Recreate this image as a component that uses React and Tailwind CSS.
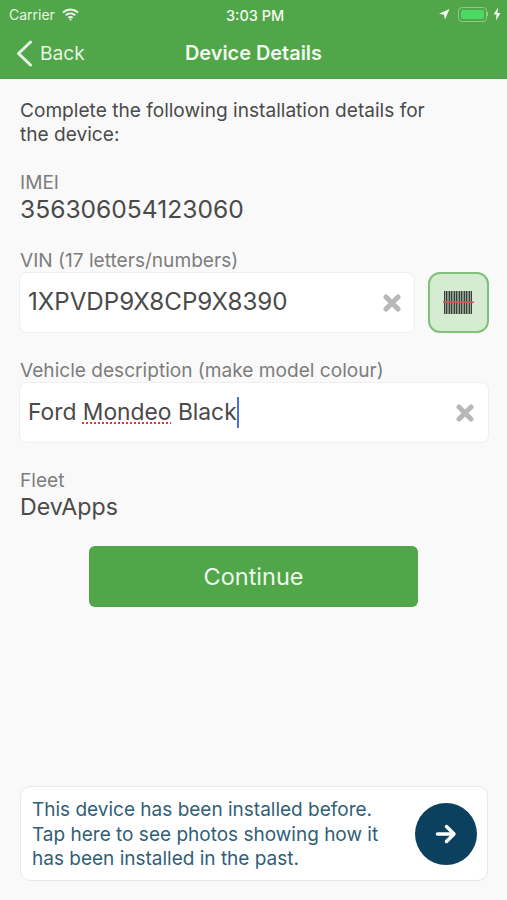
function ClearIcon() {
  return (
    <svg width="18" height="18" viewBox="0 0 18 18" className="shrink-0">
      <path d="M3 3L15 15M15 3L3 15" stroke="#b8b8b8" strokeWidth="5" strokeLinecap="round" />
    </svg>
  )
}

function BarcodeIcon() {
  const bars = [0, 2, 3.500, 5, 7, 8.500, 10, 12, 13.500, 15, 17, 18.500, 20, 22, 23.500, 25, 27]
  return (
    <svg width="31" height="24" viewBox="-1 0 31 24">
      {bars.map((x, i) => (
        <rect key={i} x={x} y="0" width={i % 3 === 0 ? 1.400 : 1} height="23" fill="#3a3f3a" />
      ))}
      <rect x="-1" y="10.500" width="31" height="1.600" fill="#d0584f" />
    </svg>
  )
}

export default function App() {
  return (
    <div className="w-[507px] h-[900px] flex flex-col bg-[#f9f9f9] overflow-hidden font-['Inter','Liberation_Sans',sans-serif]">
      {/* Status bar + nav */}
      <div className="h-[79px] bg-[#50a648] text-white shrink-0 flex flex-col">
        <div className="h-[28px] flex items-center justify-between pl-[9px] pr-[6px] relative">
          <div className="flex items-center gap-[7px] text-[14px] text-[#e8f4e6]">
            <span>Carrier</span>
            <svg width="17" height="13" viewBox="0 0 17 13" fill="none" stroke="#f2f9f1" strokeWidth="2">
              <path d="M1 4.500C5.500.5 11.500.5 16 4.500" />
              <path d="M3.800 7.200C6.500 4.900 10.500 4.900 13.200 7.200" />
              <path d="M6.300 9.800C7.500 8.900 9.500 8.900 10.700 9.800" />
              <circle cx="8.500" cy="11.500" r="1" fill="#f2f9f1" stroke="none" />
            </svg>
          </div>
          <span className="absolute left-[226px] top-[5px] text-[14.500px] font-medium text-[#f2f9f1]">3:03 PM</span>
          <div className="flex items-center">
            <svg width="12" height="11" viewBox="0 0 11 11" fill="#f0f8ef" className="mr-[8px]">
              <path d="M0.500 4.800L11 0L6.500 10.500L5.400 5.800Z" />
            </svg>
            <div className="w-[29px] h-[15px] rounded-[4px] border border-[#8dcb86] p-[2px]">
              <div className="w-full h-full rounded-[2px] bg-[#4cd964]" />
            </div>
            <span className="w-[1px] h-[4px] bg-[#8dcb86] mr-[5px]" />
            <svg width="8" height="14" viewBox="0 0 8 13" fill="#f0f8ef">
              <path d="M5 0L0.500 7H3.500L3 13L7.500 5.500H4.500Z" />
            </svg>
          </div>
        </div>
        <div className="flex-1 flex items-center relative">
          <div className="flex items-center pl-[16px] gap-[7px] text-[#e6f3e4]">
            <svg width="17" height="27" viewBox="0 0 17 27" fill="none" stroke="#e6f3e4" strokeWidth="3" strokeLinecap="round" strokeLinejoin="round">
              <path d="M14.500 2L2.500 13.500L14.500 25" />
            </svg>
            <span className="text-[19.200px]">Back</span>
          </div>
          <span className="absolute inset-x-0 text-center text-[19.900px] font-semibold text-[#f2f9f1]">Device Details</span>
        </div>
      </div>

      {/* Form */}
      <div className="flex-1 flex flex-col pl-[19px] pr-[18px] text-[#4a4a4a]">
        <p className="mt-[19px] pl-[1px] text-[19.100px] leading-[24px]">
          Complete the following installation details for
          <br />
          the device:
        </p>

        <div className="mt-[25px] pl-[1px] text-[19.100px] leading-[22px] text-[#7d7d7d]">IMEI</div>
        <div className="mt-[2px] pl-[1px] text-[24.600px] leading-[28px]">356306054123060</div>

        <div className="mt-[26px] pl-[1px] text-[19.100px] leading-[22px] text-[#7d7d7d]">VIN (17 letters/numbers)</div>
        <div className="mt-[1px] flex gap-[13px] items-stretch h-[61px]">
          <div className="flex-1 flex items-center justify-between bg-white rounded-[8px] border border-[#efefef] pl-[8px] pr-[13px]">
            <span className="text-[24.150px]">1XPVDP9X8CP9X8390</span>
            <ClearIcon />
          </div>
          <div className="w-[61px] rounded-[12px] border-2 border-[#7fc07a] bg-[#d6ecd2] flex items-center justify-center">
            <BarcodeIcon />
          </div>
        </div>

        <div className="mt-[26px] pl-[1px] text-[19.100px] leading-[22px] text-[#7d7d7d]">Vehicle description (make model colour)</div>
        <div className="mt-[1px] h-[61px] flex items-center justify-between bg-white rounded-[8px] border border-[#efefef] pl-[8px] pr-[14px]">
          <div className="flex items-center text-[22.800px]">
            <span>Ford&nbsp;</span>
            <span className="underline decoration-dotted decoration-[#e0383e] decoration-2 underline-offset-[2px]">Mondeo</span>
            <span>&nbsp;Black</span>
            <span className="w-[2px] h-[31px] bg-[#4a72d8]" />
          </div>
          <ClearIcon />
        </div>

        <div className="mt-[26px] pl-[1px] text-[19.100px] leading-[22px] text-[#7d7d7d]">Fleet</div>
        <div className="mt-[3px] pl-[1px] text-[23.200px] leading-[27px]">DevApps</div>

        <div className="mt-[25px] ml-[70px] mr-[71px] h-[61px] rounded-[6px] bg-[#50a648] flex items-center justify-center text-[23.500px] text-[#eef7ed]">
          Continue
        </div>

        {/* Previous install notice */}
        <div className="mt-auto mb-[19px] ml-[1px] mr-[1px] h-[95px] flex items-center justify-between bg-white rounded-[10px] border border-[#e8e8e8] pl-[11px] pr-[10px]">
          <p className="pt-[3px] text-[19px] leading-[24.500px] text-[#2f5f77]">
            This device has been installed before.
            <br />
            Tap here to see photos showing how it
            <br />
            has been installed in the past.
          </p>
          <div className="w-[62px] h-[62px] rounded-full bg-[#0b405f] flex items-center justify-center shrink-0">
            <svg width="22" height="22" viewBox="0 0 22 22" fill="none" stroke="#fff" strokeWidth="3.500" strokeLinecap="round" strokeLinejoin="round">
              <path d="M2.500 11H18" />
              <path d="M11.500 3.500L19 11L11.500 18.500" />
            </svg>
          </div>
        </div>
      </div>
    </div>
  )
}
